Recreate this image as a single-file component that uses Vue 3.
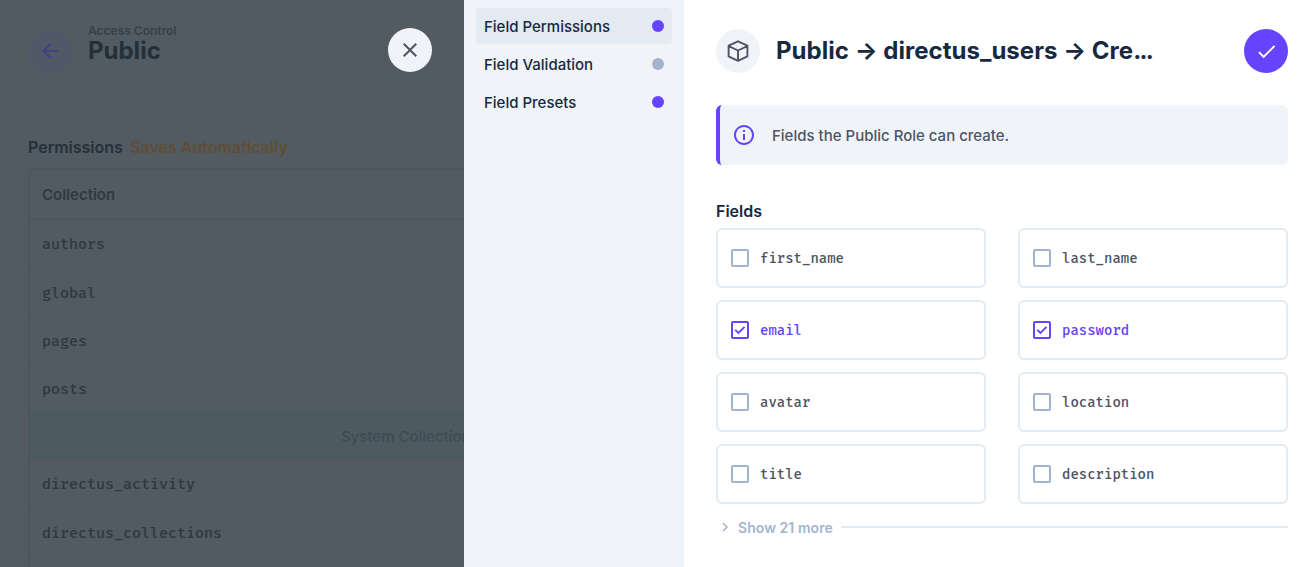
<script setup>
const navItems = [
  { label: 'Field Permissions', on: true, active: true },
  { label: 'Field Validation', on: false, active: false },
  { label: 'Field Presets', on: true, active: false },
]
const fields = [
  { name: 'first_name', checked: false },
  { name: 'last_name', checked: false },
  { name: 'email', checked: true },
  { name: 'password', checked: true },
  { name: 'avatar', checked: false },
  { name: 'location', checked: false },
  { name: 'title', checked: false },
  { name: 'description', checked: false },
]
const collections = ['authors', 'global', 'pages', 'posts']
const systemCollections = ['directus_activity', 'directus_collections']
</script>

<template>
  <div class="app">
    <section class="backdrop">
      <header class="back-header">
        <span class="circle back">
          <svg width="24" height="24" viewBox="0 0 24 24"><path d="M20 11H7.83l5.59-5.59L12 4l-8 8 8 8 1.41-1.41L7.83 13H20z" /></svg>
        </span>
        <div class="heading">
          <div class="eyebrow">Access Control</div>
          <h1>Public</h1>
        </div>
        <button class="circle close" aria-label="Close">
          <svg width="24" height="24" viewBox="0 0 24 24"><path d="M19 6.41 17.59 5 12 10.59 6.41 5 5 6.41 10.59 12 5 17.59 6.41 19 12 13.41 17.59 19 19 17.59 13.41 12z" /></svg>
        </button>
      </header>
      <div class="perm-label">Permissions <span>Saves Automatically</span></div>
      <div class="table">
        <div class="thead">Collection</div>
        <div v-for="c in collections" :key="c" class="trow">{{ c }}</div>
        <div class="system">System Collections</div>
        <div v-for="c in systemCollections" :key="c" class="trow sys-row">{{ c }}</div>
      </div>
    </section>

    <nav class="sidebar">
      <a v-for="n in navItems" :key="n.label" class="nav-item" :class="{ active: n.active }">
        <span>{{ n.label }}</span><i class="dot" :class="{ on: n.on }"></i>
      </a>
    </nav>

    <main class="drawer">
      <header class="drawer-header">
        <span class="circle box">
          <svg width="24" height="24" viewBox="0 0 24 24"><path d="M12 2.3 21.4 6.7V17.3L12 21.9 2.6 17.3V6.7z M2.8 7.2 12 11.5 21.2 7.2 M12 11.5V21.5" fill="none" stroke="#4f5464" stroke-width="1.9" stroke-linejoin="round" /></svg>
        </span>
        <h2>Public → directus_users → Cre<span class="dots">...</span></h2>
        <button class="circle save" aria-label="Save">
          <svg width="23" height="23" viewBox="0 0 24 24"><path d="M9 16.17 4.83 12l-1.42 1.41L9 19 21 7l-1.41-1.41z" /></svg>
        </button>
      </header>
      <div class="notice">
        <svg width="24" height="24" viewBox="0 0 24 24"><path d="M11 7h2v2h-2zm0 4h2v6h-2zm1-9C6.48 2 2 6.48 2 12s4.48 10 10 10 10-4.48 10-10S17.52 2 12 2zm0 18c-4.41 0-8-3.59-8-8s3.59-8 8-8 8 3.59 8 8-3.59 8-8 8z" /></svg>
        <span>Fields the Public Role can create.</span>
      </div>
      <div class="fields-label">Fields</div>
      <div class="grid">
        <label v-for="f in fields" :key="f.name" class="field" :class="{ checked: f.checked }">
          <span class="check">
            <svg v-if="f.checked" width="14" height="14" viewBox="0 0 14 14"><path d="M2.2 6.8 5.4 10 11.6 3.8" fill="none" stroke="currentColor" stroke-width="1.9" /></svg>
          </span>
          <span>{{ f.name }}</span>
        </label>
      </div>
      <div class="more">
        <svg width="18" height="18" viewBox="0 0 24 24"><path d="M10 6 8.59 7.41 13.17 12l-4.58 4.59L10 18l6-6z" /></svg>
        <span>Show 21 more</span>
        <i class="rule"></i>
      </div>
    </main>
  </div>
</template>

<style>
body { margin: 0; overflow: hidden; }
</style>
<style scoped>
* { box-sizing: border-box; }
.app { display: flex; width: 1307px; height: 567px; overflow: hidden; background: #fff; font-family: Inter, sans-serif; font-size: 15px; font-weight: 500; }
svg { display: block; flex: none; }
h1, h2 { margin: 0; font-weight: 700; font-size: 24px; }
.circle { width: 44px; height: 44px; border: 0; padding: 0; border-radius: 50%; flex: none; display: flex; align-items: center; justify-content: center; }
.backdrop { width: 464px; flex: none; background: #525b61; overflow: hidden; padding-left: 28px; color: #2e3941; }
.back-header { display: flex; padding: 28px 32px 0 0; }
.back { background: #515867; margin-top: 1px; }
.back svg { fill: #453f85; }
.heading { flex: 1; padding-left: 16px; }
.eyebrow { font-size: 12px; line-height: 14px; margin-top: -4px; font-weight: 600; color: #35424a; }
.heading h1 { line-height: 26px; color: #23303a; }
.close { background: #f0f4f9; }
.close svg { fill: #4f5464; }
.perm-label { margin-top: 62px; height: 33px; line-height: 24px; font-size: 16px; font-weight: 600; color: #23303a; }
.perm-label span { color: #5f4e36; margin-left: 3px; letter-spacing: 0.03px; }
.table { width: 764px; height: 500px; border: 2px solid #4b585d; border-radius: 6px; }
.thead { height: 50px; line-height: 50px; padding-left: 12px; font-weight: 600; border-bottom: 2px solid #4b585d; }
.trow { height: 48px; line-height: 48px; padding-left: 12px; border-bottom: 2px solid #4d5a5f; font-family: "Fira Mono", "DejaVu Sans Mono", monospace; font-size: 15px; }
.thead + .trow, .sys-row { height: 49px; }
.system { height: 48px; margin-top: -1px; line-height: 49px; padding-left: 311px; white-space: nowrap; color: #3f4c57; background: #4d5a5f; }
.sidebar { width: 220px; flex: none; background: #f0f4f9; padding: 8px 12px; }
.nav-item { display: flex; align-items: center; justify-content: space-between; height: 36px; padding: 0 8px; border-radius: 4px; margin-bottom: 2px; color: #172940; }
.nav-item.active { background: #e4eaf1; }
.dot { width: 12px; height: 12px; border-radius: 50%; background: #a2b5cd; }
.dot.on { background: #6644ff; }
.drawer { flex: 1; padding: 29px 19px 0 32px; color: #4f5464; }
.drawer-header { display: flex; align-items: center; }
.box, .notice { background: #f0f4f9; }
.drawer-header h2 { flex: 1; padding: 0 0 2px 16px; color: #172940; white-space: nowrap; letter-spacing: 0.03px; }
.dots { letter-spacing: -1.7px; }
.save { background: #6644ff; }
.save svg { fill: #fff; }
.notice { margin-top: 32px; height: 60px; display: flex; align-items: center; gap: 16px; border-left: 4px solid #6644ff; border-radius: 6px; padding-left: 12px; }
.notice svg { fill: #6644ff; }
.fields-label { margin-top: 34px; line-height: 24px; height: 29px; font-size: 16px; font-weight: 600; color: #172940; }
.grid { display: grid; grid-template-columns: 1fr 1fr; gap: 12px 32px; }
.field { height: 60px; border: 2px solid #e4eaf1; border-radius: 6px; display: flex; align-items: center; padding-left: 13px; gap: 11px; font-family: "Fira Mono", "DejaVu Sans Mono", monospace; font-size: 14px; }
.check { width: 18px; height: 18px; border: 2px solid #a2b5cd; border-radius: 2px; }
.checked { color: #6644ff; }
.checked .check { border-color: #6644ff; }
.more { display: flex; align-items: center; margin-top: 13px; height: 20px; font-size: 14px; font-weight: 600; color: #a2b5cd; }
.more svg { fill: #a2b5cd; margin-right: 4px; }
.more span { letter-spacing: 0.06px; }
.rule { flex: 1; height: 2px; background: #e4eaf1; margin-left: 8px; }
</style>
